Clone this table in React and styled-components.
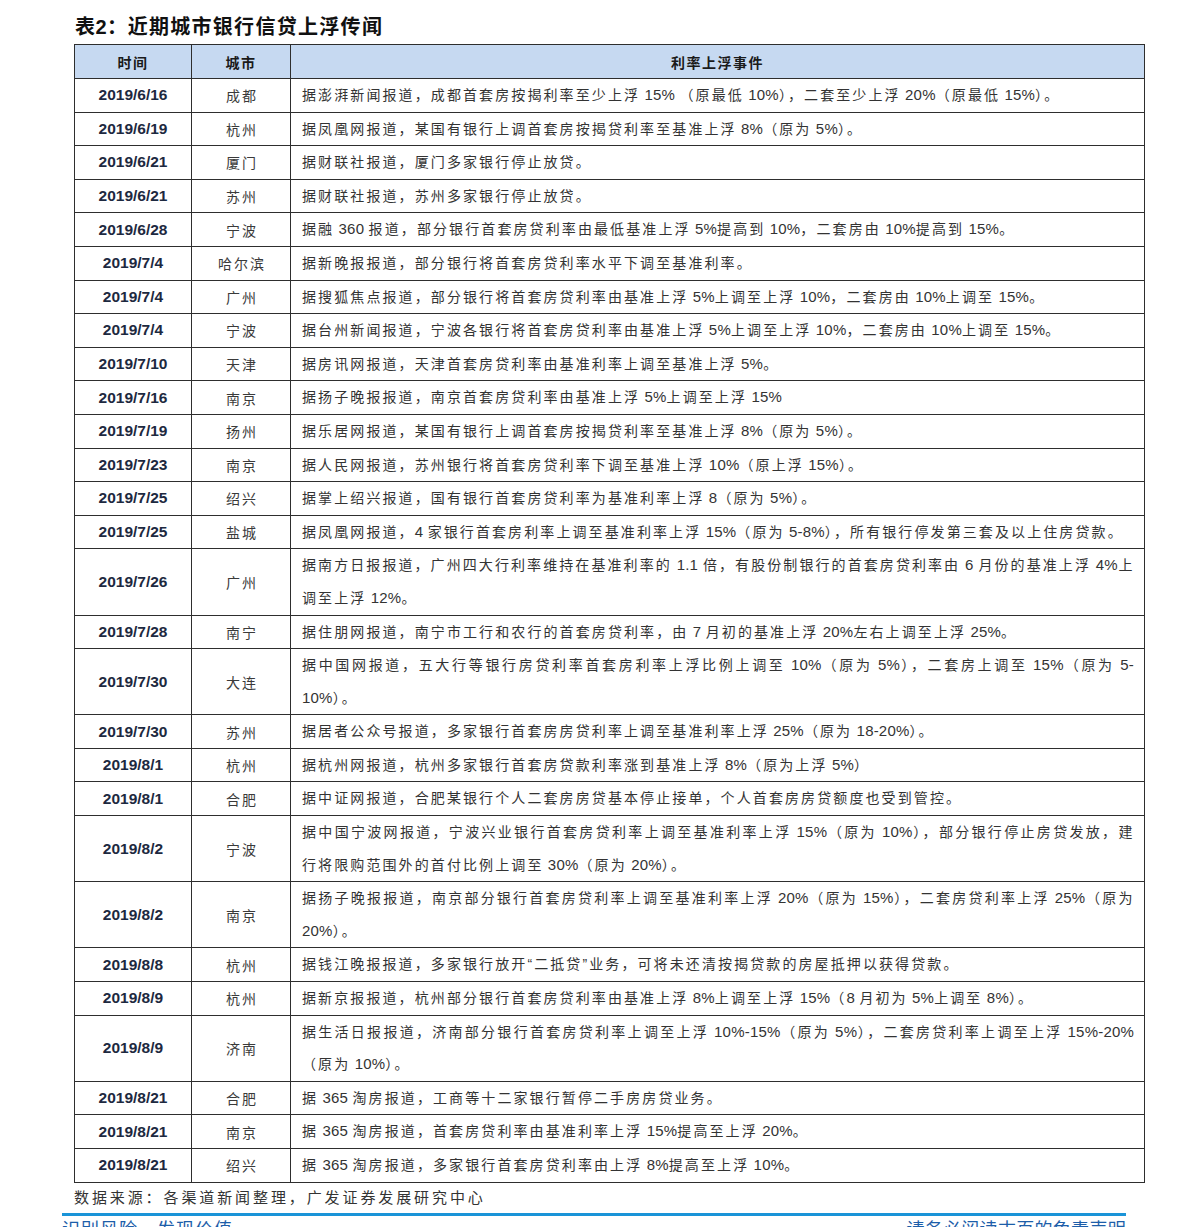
import React from 'react'
import styled, { createGlobalStyle } from 'styled-components'

const GlobalStyle = createGlobalStyle`
    html, body {
        margin: 0;
        padding: 0;
        background: #ffffff;
    }
    body {
        font-family: "Liberation Sans", "Noto Sans CJK SC", sans-serif;
        color: #333;
    }
`;

const rows = [
    ['2019/6/16', '成都', ['据澎湃新闻报道，成都首套房按揭利率至少上浮 15% （原最低 10%），二套至少上浮 20%（原最低 15%）。']],
    ['2019/6/19', '杭州', ['据凤凰网报道，某国有银行上调首套房按揭贷利率至基准上浮 8%（原为 5%）。']],
    ['2019/6/21', '厦门', ['据财联社报道，厦门多家银行停止放贷。']],
    ['2019/6/21', '苏州', ['据财联社报道，苏州多家银行停止放贷。']],
    ['2019/6/28', '宁波', ['据融 360 报道，部分银行首套房贷利率由最低基准上浮 5%提高到 10%，二套房由 10%提高到 15%。']],
    ['2019/7/4', '哈尔滨', ['据新晚报报道，部分银行将首套房贷利率水平下调至基准利率。']],
    ['2019/7/4', '广州', ['据搜狐焦点报道，部分银行将首套房贷利率由基准上浮 5%上调至上浮 10%，二套房由 10%上调至 15%。']],
    ['2019/7/4', '宁波', ['据台州新闻报道，宁波各银行将首套房贷利率由基准上浮 5%上调至上浮 10%，二套房由 10%上调至 15%。']],
    ['2019/7/10', '天津', ['据房讯网报道，天津首套房贷利率由基准利率上调至基准上浮 5%。']],
    ['2019/7/16', '南京', ['据扬子晚报报道，南京首套房贷利率由基准上浮 5%上调至上浮 15%']],
    ['2019/7/19', '扬州', ['据乐居网报道，某国有银行上调首套房按揭贷利率至基准上浮 8%（原为 5%）。']],
    ['2019/7/23', '南京', ['据人民网报道，苏州银行将首套房贷利率下调至基准上浮 10%（原上浮 15%）。']],
    ['2019/7/25', '绍兴', ['据掌上绍兴报道，国有银行首套房贷利率为基准利率上浮 8（原为 5%）。']],
    ['2019/7/25', '盐城', ['据凤凰网报道，4 家银行首套房利率上调至基准利率上浮 15%（原为 5-8%），所有银行停发第三套及以上住房贷款。']],
    ['2019/7/26', '广州', ['据南方日报报道，广州四大行利率维持在基准利率的 1.1 倍，有股份制银行的首套房贷利率由 6 月份的基准上浮 4%上', '调至上浮 12%。']],
    ['2019/7/28', '南宁', ['据住朋网报道，南宁市工行和农行的首套房贷利率，由 7 月初的基准上浮 20%左右上调至上浮 25%。']],
    ['2019/7/30', '大连', ['据中国网报道，五大行等银行房贷利率首套房利率上浮比例上调至 10%（原为 5%），二套房上调至 15%（原为 5-', '10%）。']],
    ['2019/7/30', '苏州', ['据居者公众号报道，多家银行首套房房贷利率上调至基准利率上浮 25%（原为 18-20%）。']],
    ['2019/8/1', '杭州', ['据杭州网报道，杭州多家银行首套房贷款利率涨到基准上浮 8%（原为上浮 5%）']],
    ['2019/8/1', '合肥', ['据中证网报道，合肥某银行个人二套房房贷基本停止接单，个人首套房房贷额度也受到管控。']],
    ['2019/8/2', '宁波', ['据中国宁波网报道，宁波兴业银行首套房贷利率上调至基准利率上浮 15%（原为 10%），部分银行停止房贷发放，建', '行将限购范围外的首付比例上调至 30%（原为 20%）。']],
    ['2019/8/2', '南京', ['据扬子晚报报道，南京部分银行首套房贷利率上调至基准利率上浮 20%（原为 15%），二套房贷利率上浮 25%（原为', '20%）。']],
    ['2019/8/8', '杭州', ['据钱江晚报报道，多家银行放开“二抵贷”业务，可将未还清按揭贷款的房屋抵押以获得贷款。']],
    ['2019/8/9', '杭州', ['据新京报报道，杭州部分银行首套房贷利率由基准上浮 8%上调至上浮 15%（8 月初为 5%上调至 8%）。']],
    ['2019/8/9', '济南', ['据生活日报报道，济南部分银行首套房贷利率上调至上浮 10%-15%（原为 5%），二套房贷利率上调至上浮 15%-20%', '（原为 10%）。']],
    ['2019/8/21', '合肥', ['据 365 淘房报道，工商等十二家银行暂停二手房房贷业务。']],
    ['2019/8/21', '南京', ['据 365 淘房报道，首套房贷利率由基准利率上浮 15%提高至上浮 20%。']],
    ['2019/8/21', '绍兴', ['据 365 淘房报道，多家银行首套房贷利率由上浮 8%提高至上浮 10%。']],
]

// latin runs (digits, %, spaces) are set without the wide CJK tracking
function Mixed({ text }) {
    const parts = text.split(/([\u0020-\u024F]+)/).filter(Boolean)
    return parts.map((p, i) =>
        /^[\u0020-\u024F]+$/.test(p) ? <Latin key={i}>{p}</Latin> : <React.Fragment key={i}>{p}</React.Fragment>
    )
}

function App() {
    return (
        <PageStyled>
            <GlobalStyle />
            <div className="content">
                <Title>表2：<span>近期城市银行信贷上浮传闻</span></Title>
                <Table>
                    <colgroup>
                        <col style={{ width: 117 }} />
                        <col style={{ width: 99 }} />
                        <col />
                    </colgroup>
                    <thead>
                        <tr>
                            <HeadCell>时间</HeadCell>
                            <HeadCell>城市</HeadCell>
                            <HeadCell>利率上浮事件</HeadCell>
                        </tr>
                    </thead>
                    <tbody>
                        {rows.map(([date, city, lines], idx) => (
                            <tr key={idx}>
                                <DateCell>{date}</DateCell>
                                <CityCell>{city}</CityCell>
                                <EventCell>
                                    {lines.map((line, j) => (
                                        <Line key={j} $justify={j < lines.length - 1}>
                                            <Mixed text={line} />
                                        </Line>
                                    ))}
                                </EventCell>
                            </tr>
                        ))}
                    </tbody>
                </Table>
                <Source>数据来源：各渠道新闻整理，广发证券发展研究中心</Source>
            </div>
            <Footer>
                <span className="left">识别风险，发现价值</span>
                <span className="right">请务必阅读末页的免责声明</span>
            </Footer>
        </PageStyled>
    )
}

const PageStyled = styled.div`
    width: 1191px;
    height: 1227px;
    overflow: hidden;
    .content{
        margin-left: 74px;
        width: 1071px;
        padding-top: 14px;
    }
`;

const Title = styled.h1`
    margin: 0 0 3px 1px;
    height: 27px;
    font-size: 20px;
    line-height: 27px;
    font-weight: 700;
    color: #111;
    letter-spacing: 0.5px;
    span{
        letter-spacing: 1.3px;
    }
`;

const Table = styled.table`
    width: 1071px;
    border-collapse: collapse;
    table-layout: fixed;
    border: 1.5px solid #444;
    td, th{
        border: 1px solid #2e2e2e;
        padding: 0;
        vertical-align: middle;
    }
`;

const HeadCell = styled.th`
    height: 33px;
    background: #c6d9f1;
    font-size: 14px;
    font-weight: 700;
    color: #1a1a1a;
    letter-spacing: 1.5px;
    text-align: center;
`;

const DateCell = styled.td`
    text-align: center;
    font-family: "Liberation Sans", Arial, sans-serif;
    font-size: 15.5px;
    font-weight: 700;
    color: #1d2940;
`;

const CityCell = styled.td`
    text-align: center;
    font-size: 14px;
    color: #3a3a3a;
    letter-spacing: 2px;
    padding-left: 2px !important;
`;

const EventCell = styled.td`
    padding: 0 10px 0 11px !important;
    font-size: 14px;
    color: #333;
    letter-spacing: 2.1px;
`;

const Line = styled.div`
    line-height: 32.6px;
    white-space: nowrap;
    text-align: left;
    ${({ $justify }) => $justify && `
        white-space: normal;
        text-align: justify;
        text-align-last: justify;
        letter-spacing: 1.6px;
    `}
`;

const Latin = styled.span`
    font-family: "Liberation Sans", Arial, sans-serif;
    font-size: 15px;
    letter-spacing: 0.2px;
`;

const Source = styled.div`
    margin-top: 3px;
    font-size: 15px;
    line-height: 24px;
    letter-spacing: 2.9px;
    color: #333;
`;

const Footer = styled.div`
    margin: 3px 0 0 62px;
    width: 1064px;
    border-top: 3px solid #1a94d8;
    display: flex;
    justify-content: space-between;
    padding-top: 2px;
    font-size: 18px;
    line-height: 24px;
    color: #1d5ea9;
    .left{
        letter-spacing: 1px;
    }
    .right{
        letter-spacing: 0.3px;
    }
`;

export default App
